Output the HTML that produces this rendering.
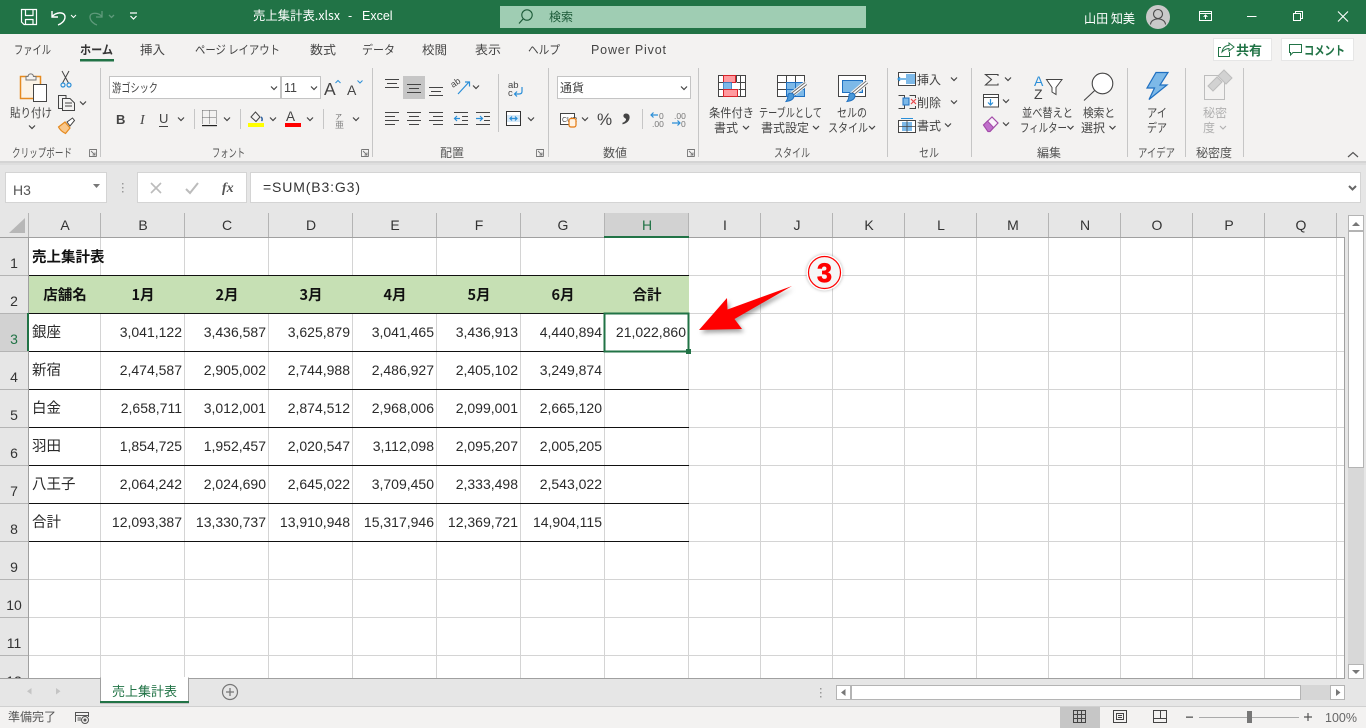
<!DOCTYPE html>
<html lang="ja">
<head>
<meta charset="utf-8">
<title>売上集計表.xlsx - Excel</title>
<style>
html,body{margin:0;padding:0;background:#fff;overflow:hidden}
svg{display:block;position:absolute;left:0;top:0}
text{font-family:"Liberation Sans","Noto Sans CJK JP",sans-serif;white-space:pre}
.j{font-family:"Noto Sans CJK JP","Liberation Sans",sans-serif}
.r{font-size:12px;fill:#444}
.g{font-size:12px;fill:#555}
.t{font-size:12px;fill:#444}
.d{font-size:14px;fill:#2a2a2a;text-anchor:end}
.k{font-size:14.5px;fill:#2a2a2a;font-family:"Noto Sans CJK JP","Liberation Sans",sans-serif}
.h{font-size:14.5px;fill:#111;font-weight:700;text-anchor:middle;font-family:"Noto Sans CJK JP","Liberation Sans",sans-serif}
.c{font-size:14px;fill:#333;text-anchor:middle}
.l{stroke:#444;stroke-width:1;fill:none;shape-rendering:crispEdges}
.b{stroke:#2b8fd8;stroke-width:1.2;fill:none}
.i{stroke:#444;stroke-width:1;fill:none}
</style>
</head>
<body>
<svg width="1366" height="728" viewBox="0 0 1366 728" xmlns="http://www.w3.org/2000/svg">
<defs>
<path id="v" d="M-3-1.5L0 1.5L3-1.5" fill="none" stroke="#444" stroke-width="1.2"/>
</defs>

<!-- backgrounds -->
<rect width="1366" height="728" fill="#fff"/>
<rect width="1366" height="34" fill="#217346"/>
<rect y="34" width="1366" height="127" fill="#f3f2f1"/>
<rect y="161" width="1366" height="52" fill="#e6e6e6"/>
<rect y="161" width="1366" height="2" fill="#d4d4d4"/>
<rect y="163" width="1366" height="2" fill="#dedede"/>

<!-- title bar -->
<g fill="none" stroke="#fff" stroke-width="1.2">
<path d="M21.5 9.5H36.5V24.5H24L21.5 22Z"/><path d="M25.5 9.5V15.5H33V9.5M25.5 24.5V19.5H33V24.5"/>
<path d="M52 11V17H58M52 17C55 12 65 11 65 17C65 21 61 24 58 25" stroke-width="1.4"/>
<path d="M71 15L73.5 17.5L76 15" stroke-width="1"/>
</g>
<g fill="none" stroke="#5f9a7b" stroke-width="1.3">
<path d="M102 11V17H96M102 17C99 12 90 12 90 17C90 21 94 24 97 25"/>
<path d="M109 15L111.5 17.5L114 15"/>
</g>
<path d="M130 13H137M130.5 16L133.5 19L136.5 16" fill="none" stroke="#fff" stroke-width="1.2"/>
<text class="j" x="253" y="20" font-size="12.5" fill="#fff" textLength="87" lengthAdjust="spacingAndGlyphs">売上集計表.xlsx</text>
<text x="348" y="20" font-size="12.5" fill="#fff">-</text>
<text x="362" y="20" font-size="12.5" fill="#fff">Excel</text>
<rect x="500" y="6" width="366" height="22" fill="#9fcdb3"/>
<circle cx="527" cy="15" r="5.2" fill="none" stroke="#1c5a38" stroke-width="1.1"/>
<path d="M523 19L519 23.5" stroke="#1c5a38" stroke-width="1.2"/>
<text class="j" x="549" y="21" font-size="12" fill="#1c5a38">検索</text>
<text class="j" x="1084" y="23" font-size="12.5" fill="#fff" textLength="51" lengthAdjust="spacingAndGlyphs">山田 知美</text>
<circle cx="1158" cy="17" r="12" fill="#c9c9c9"/>
<circle cx="1158" cy="14" r="4.5" fill="none" stroke="#4a4a4a" stroke-width="1.1"/>
<path d="M1150.5 24.5C1151 17 1165 17 1165.5 24.5" fill="none" stroke="#4a4a4a" stroke-width="1.1"/>
<g fill="none" stroke="#fff" stroke-width="1" shape-rendering="crispEdges">
<path d="M1199.5 11.5H1211.5V20.5H1199.5ZM1199.5 13.5H1211.5"/>
<path d="M1205.5 19V15.5M1203.5 17L1205.5 15L1207.5 17"/>
<path d="M1247 16.5H1256.5"/>
<path d="M1293.5 13.5H1300.5V20.5H1293.5ZM1295.5 13.5V11.5H1302.5V18.5H1300.5"/>
</g>
<path d="M1338 11.5L1348 21.5M1348 11.5L1338 21.5" stroke="#fff" stroke-width="1.1"/>

<!-- tabs -->
<text class="j t" x="14" y="54" textLength="37" lengthAdjust="spacingAndGlyphs">ファイル</text>
<text class="j" x="80" y="54" font-size="12" font-weight="700" fill="#333" textLength="33" lengthAdjust="spacingAndGlyphs">ホーム</text>
<text class="j t" x="140" y="54" textLength="25" lengthAdjust="spacingAndGlyphs">挿入</text>
<text class="j t" x="195" y="54" textLength="85" lengthAdjust="spacingAndGlyphs">ページ レイアウト</text>
<text class="j t" x="310" y="54" textLength="26" lengthAdjust="spacingAndGlyphs">数式</text>
<text class="j t" x="362" y="54" textLength="33" lengthAdjust="spacingAndGlyphs">データ</text>
<text class="j t" x="422" y="54" textLength="25" lengthAdjust="spacingAndGlyphs">校閲</text>
<text class="j t" x="475" y="54" textLength="26" lengthAdjust="spacingAndGlyphs">表示</text>
<text class="j t" x="528" y="54" textLength="32" lengthAdjust="spacingAndGlyphs">ヘルプ</text>
<text x="591" y="54" font-size="12.5" fill="#444" textLength="75">Power Pivot</text>
<rect x="80" y="59" width="34" height="2.5" fill="#217346"/>
<rect x="1213.5" y="38.5" width="58" height="22" fill="#fff" stroke="#e6e6e6"/>
<path d="M1221 47.5H1218.5V56.5H1229.5V52M1222 52C1223 47 1226 45.5 1229 45.5V43L1234 47L1229 51V48.5C1226 48.5 1224 50 1222 52Z" fill="none" stroke="#217346" stroke-width="1"/>
<text class="j" x="1236" y="55" font-size="13" font-weight="700" fill="#217346">共有</text>
<rect x="1281.5" y="38.5" width="72" height="22" fill="#fff" stroke="#e6e6e6"/>
<path d="M1289.5 44.5H1301.5V52.5H1293L1290.5 55V52.5H1289.5Z" fill="none" stroke="#217346" stroke-width="1"/>
<text class="j" x="1304" y="55" font-size="12.5" font-weight="700" fill="#217346" textLength="41" lengthAdjust="spacingAndGlyphs">コメント</text>

<!-- ribbon separators -->
<g fill="#c6c6c6">
<rect x="100" y="68" width="1" height="89"/><rect x="372" y="68" width="1" height="89"/><rect x="548" y="68" width="1" height="89"/><rect x="698" y="68" width="1" height="89"/><rect x="887" y="68" width="1" height="89"/><rect x="971" y="68" width="1" height="89"/><rect x="1127" y="68" width="1" height="89"/><rect x="1185" y="68" width="1" height="89"/><rect x="1243" y="68" width="1" height="89"/>
<rect x="194" y="109" width="1" height="20"/><rect x="240" y="109" width="1" height="20"/><rect x="323" y="109" width="1" height="20"/><rect x="498" y="74" width="1" height="58"/><rect x="642" y="109" width="1" height="20"/>
</g>

<!-- clipboard -->
<rect x="20.5" y="76.5" width="20" height="22" fill="#fbf3e6" stroke="#e58a1f" stroke-width="1.5"/>
<path d="M26 80V76.5H28C28.5 73 33 73 33.5 76.5H36V80Z" fill="#f3f2f1" stroke="#777"/>
<rect x="33.5" y="84.5" width="13" height="17" fill="#fff" stroke="#444"/>
<text class="j r" x="10" y="117" textLength="42" lengthAdjust="spacingAndGlyphs">貼り付け</text>
<use href="#v" x="32" y="127"/>
<path d="M62 71L68.5 83M69 71L62.5 83" stroke="#444" fill="none"/>
<circle cx="63" cy="85" r="2" fill="none" stroke="#2b8fd8" stroke-width="1.2"/><circle cx="69" cy="85" r="2" fill="none" stroke="#2b8fd8" stroke-width="1.2"/>
<path d="M62.5 108.5H58.5V95.5H66V98.5M62.5 98.5H70L74.5 103V110.5H62.5Z M65 103H72M65 106H72" class="i"/>
<use href="#v" x="83" y="103"/>
<path d="M58.5 127L65 122L70 128L65.5 133.5C62.5 132 60 130 58.5 127Z" fill="#f9c78a" stroke="#e58a1f" stroke-width="1.2"/>
<path d="M67 122L72.5 118L74.5 120.5L70 126Z" fill="#fff" stroke="#444"/>
<text class="j g" x="12" y="157" textLength="60" lengthAdjust="spacingAndGlyphs">クリップボード</text>
<path d="M89.5 149.5H96.5V156.5M89.5 149.5V156.5H96.5M91 151L95 155M95 152.5V155H92.5" fill="none" stroke="#777" stroke-width=".9"/>

<!-- font -->
<rect x="109.5" y="76.5" width="171" height="22" fill="#fff" stroke="#c4c4c4"/>
<text class="j" x="112" y="92" font-size="12" fill="#444" textLength="46" lengthAdjust="spacingAndGlyphs">游ゴシック</text>
<use href="#v" x="274" y="88"/>
<rect x="281.5" y="76.5" width="39" height="22" fill="#fff" stroke="#c4c4c4"/>
<text x="284" y="92" font-size="12.5" fill="#444">11</text>
<use href="#v" x="314" y="88"/>
<text x="324" y="95" font-size="17.5" fill="#444">A</text>
<path d="M335.5 83L338 80.5L340.5 83" fill="none" stroke="#2b8fd8"/>
<text x="347" y="95" font-size="14" fill="#444">A</text>
<path d="M357.5 80.5L360 83L362.5 80.5" fill="none" stroke="#2b8fd8"/>
<text x="116" y="124" font-size="13" font-weight="700" fill="#444">B</text>
<text x="140" y="124" font-size="14" fill="#444" style="font-style:italic;font-family:'Liberation Serif',serif">I</text>
<text x="159" y="123" font-size="13" fill="#444">U</text>
<rect x="159" y="126" width="9" height="1" fill="#444"/>
<use href="#v" x="181" y="119"/>
<path d="M202.5 110.5H216.5V124.5M202.5 110.5V124M209.5 110.5V124M202.5 117.5H216.5" fill="none" stroke="#666" stroke-dasharray="1 1" shape-rendering="crispEdges"/>
<rect x="202" y="125" width="15" height="1.2" fill="#222"/>
<use href="#v" x="227" y="119"/>
<path d="M251 117L255.5 112L260 117L256 121.5Z" fill="none" stroke="#444"/>
<path d="M261 117C262.5 118 262.5 120 261.5 121" stroke="#2b5f9e" fill="none" stroke-width="1.5"/>
<rect x="248" y="123" width="16" height="4" fill="#ffff00"/>
<use href="#v" x="273" y="119"/>
<text x="286" y="121" font-size="13.5" fill="#444">A</text>
<rect x="285" y="123" width="16" height="4" fill="#ff0000"/>
<use href="#v" x="310" y="119"/>
<text class="j" x="335" y="119" font-size="7" fill="#666">ア</text>
<text class="j" x="335" y="128" font-size="9" fill="#888">亜</text>
<use href="#v" x="356" y="119"/>
<text class="j g" x="212" y="157" textLength="33" lengthAdjust="spacingAndGlyphs">フォント</text>
<path d="M361.5 149.5H368.5V156.5M361.5 149.5V156.5H368.5M363 151L367 155M367 152.5V155H364.5" fill="none" stroke="#777" stroke-width=".9"/>

<!-- alignment -->
<rect x="403" y="76" width="22" height="23" fill="#c6c6c6"/>
<path d="M385 79.5H399M387 83.5H397M385 87.5H399" class="l"/>
<path d="M407 84.5H421M409 88.5H419M407 92.5H421" class="l"/>
<path d="M429 87.5H443M431 91.5H441M429 95.5H443" class="l"/>
<path d="M385 112.5H399M385 116.5H395M385 120.5H399M385 124.5H395" class="l"/>
<path d="M407 112.5H421M409 116.5H419M407 120.5H421M409 124.5H419" class="l"/>
<path d="M429 112.5H443M433 116.5H443M429 120.5H443M433 124.5H443" class="l"/>
<text x="453" y="88" font-size="9" fill="#444" transform="rotate(-35 453 88)">ab</text>
<path d="M458 94L469 82M465 82H469.5V86.5" class="b"/>
<use href="#v" x="476" y="87"/>
<path d="M454 112.5H468M462 116.5H468M462 120.5H468M454 124.5H468" class="l"/>
<path d="M460 118.5H454.5M457 116L454.5 118.5L457 121" class="b"/>
<path d="M476 112.5H490M484 116.5H490M484 120.5H490M476 124.5H490" class="l"/>
<path d="M476 118.5H482.5M480 116L482.5 118.5L480 121" class="b"/>
<text x="508" y="88" font-size="9.5" fill="#444">ab</text>
<text x="508" y="96" font-size="9.5" fill="#444">c</text>
<path d="M522 87V91.5C522 93 521 94 519 94H514.5M517 91.5L514.5 94L517 96.5" class="b"/>
<rect x="506.5" y="111.5" width="14" height="14" fill="#fff" stroke="#333"/>
<rect x="507" y="115" width="13" height="7" fill="#d5e8f7"/>
<path d="M510 118.5H517M512 116.5L510 118.5L512 120.5M515 116.5L517 118.5L515 120.5" class="b"/>
<use href="#v" x="531" y="119"/>
<text class="j g" x="440" y="157">配置</text>
<path d="M536.5 149.5H543.5V156.5M536.5 149.5V156.5H543.5M538 151L542 155M542 152.5V155H539.5" fill="none" stroke="#777" stroke-width=".9"/>

<!-- number -->
<rect x="557.5" y="76.5" width="133" height="22" fill="#fff" stroke="#c4c4c4"/>
<text class="j" x="560" y="92" font-size="12" fill="#444">通貨</text>
<use href="#v" x="684" y="88"/>
<rect x="560.5" y="113.5" width="14" height="11" fill="#fff" stroke="#444"/>
<text x="562" y="122" font-size="7" fill="#444">CUR</text>
<rect x="569" y="118.5" width="7" height="8.5" rx="2" fill="#fff3e3" stroke="#e57a10" stroke-width="1.2"/>
<use href="#v" x="585" y="119"/>
<text x="597" y="125" font-size="17" fill="#444">%</text>
<text x="622" y="119" font-size="36" font-weight="700" fill="#444" style="font-family:'Liberation Serif',serif">,</text>
<text x="659" y="119" font-size="8.5" fill="#777">0</text>
<text x="652" y="127" font-size="8.5" fill="#777">.00</text>
<path d="M651 115H658M653.5 112.5L651 115L653.5 117.5" class="b"/>
<text x="674" y="119" font-size="8.5" fill="#777">.00</text>
<text x="681" y="127" font-size="8.5" fill="#777">0</text>
<path d="M672 123H680M677.5 120.5L680 123L677.5 125.5" class="b"/>
<text class="j g" x="603" y="157">数値</text>
<path d="M687.5 149.5H694.5V156.5M687.5 149.5V156.5H694.5M689 151L693 155M693 152.5V155H690.5" fill="none" stroke="#777" stroke-width=".9"/>

<!-- styles -->
<rect x="718.5" y="75.5" width="27" height="21" fill="#fff" stroke="#444"/>
<rect x="723.5" y="75.5" width="12" height="7" fill="#ff9a9f" stroke="#d8232a"/>
<rect x="723.5" y="82.5" width="8" height="7" fill="#7db9e8" stroke="#2b7cc4" stroke-width=".8"/>
<rect x="723.5" y="89.5" width="14" height="7" fill="#ff9a9f" stroke="#d8232a"/>
<path d="M736.5 82.5H745M738.5 89.5H745M736.5 75.5V82M740.5 75.5V96.5M718.5 82.5H723M718.5 89.5H723" class="l"/>
<rect x="777.5" y="75.5" width="27" height="21" fill="#fff" stroke="#444"/>
<rect x="786.5" y="82.5" width="18" height="14" fill="#7db9e8" stroke="#1f70c1"/>
<path d="M786.5 75.5V82M795.5 75.5V82M777.5 82.5H786M777.5 89.5H786" stroke="#444" fill="none" shape-rendering="crispEdges"/>
<path d="M795.5 82.5V96.5M786.5 89.5H804.5" stroke="#1f70c1" fill="none" shape-rendering="crispEdges"/>
<path d="M806 83.5L790 96" stroke="#f3f2f1" stroke-width="5.5"/>
<path d="M806 83.5L790 96" stroke="#666" stroke-width="3.4"/>
<path d="M806 83.5L790 96" stroke="#fff" stroke-width="1.6"/>
<path d="M786 101.5C790 101 794 99.5 794 95.5C793 92.5 789.5 92.5 788 94.5C788 97 787.5 99.5 786 101.5Z" fill="#4a98d8" stroke="#1f70c1"/>
<rect x="838.5" y="75.5" width="27" height="21" fill="#fff" stroke="#444"/>
<rect x="842.5" y="80.5" width="20" height="12" fill="#7db9e8" stroke="#1f70c1"/>
<path d="M867 82L851 95.5" stroke="#f3f2f1" stroke-width="5.5"/>
<path d="M867 82L851 95.5" stroke="#666" stroke-width="3.4"/>
<path d="M867 82L851 95.5" stroke="#fff" stroke-width="1.6"/>
<path d="M847 101.5C851 101 855 99.5 855 95.5C854 92.5 850.5 92.5 849 94.5C849 97 848.500 99.5 847 101.5Z" fill="#4a98d8" stroke="#1f70c1"/>
<text class="j r" x="709" y="117" textLength="45" lengthAdjust="spacingAndGlyphs">条件付き</text>
<text class="j r" x="714" y="132">書式</text><use href="#v" x="746" y="127.5"/>
<text class="j r" x="759" y="117" textLength="63" lengthAdjust="spacingAndGlyphs">テーブルとして</text>
<text class="j r" x="761" y="132" textLength="48" lengthAdjust="spacingAndGlyphs">書式設定</text><use href="#v" x="816" y="127.5"/>
<text class="j r" x="837" y="117" textLength="30" lengthAdjust="spacingAndGlyphs">セルの</text>
<text class="j r" x="828" y="132" textLength="40" lengthAdjust="spacingAndGlyphs">スタイル</text><use href="#v" x="872" y="127.5"/>
<text class="j g" x="774" y="157" textLength="36" lengthAdjust="spacingAndGlyphs">スタイル</text>

<!-- cells -->
<rect x="898.5" y="72.5" width="17" height="13" fill="#fff" stroke="#444"/>
<rect x="906" y="74" width="9" height="10" fill="#7db9e8"/>
<path d="M898 79H906M900 77L898 79L900 81" class="b" stroke-width="1"/>
<path d="M898.5 95.5H904.5V108.5H898.5M909.5 95.5H915.5V98M909.5 108.500H915.5V106" class="i"/>
<rect x="903" y="98" width="6" height="7" fill="#7db9e8" stroke="#1f70c1"/>
<path d="M911 99L916 104M916 99L911 104" stroke="#e8474c" stroke-width="1.2"/>
<rect x="898.5" y="120.5" width="17" height="12" fill="#fff" stroke="#444"/>
<rect x="902" y="122" width="10" height="9" fill="#7db9e8"/>
<path d="M901 118.5H913" stroke="#2b8fd8"/><path d="M907 120V133M898 126.5H916" stroke="#444" fill="none" stroke-width=".8"/>
<text class="j r" x="917" y="84">挿入</text><use href="#v" x="954" y="79"/>
<text class="j r" x="917" y="107">削除</text><use href="#v" x="954" y="102"/>
<text class="j r" x="917" y="130">書式</text><use href="#v" x="948" y="125"/>
<text class="j g" x="919" y="157" textLength="20" lengthAdjust="spacingAndGlyphs">セル</text>

<!-- editing -->
<path d="M998 76V74.500H985.5L991.5 79.500L985.5 85H998V83.500" fill="none" stroke="#444" stroke-width="1.1"/>
<use href="#v" x="1008" y="79"/>
<rect x="983.5" y="94.5" width="15" height="12.5" fill="#fff" stroke="#444"/>
<path d="M983.5 97.5H998.5" stroke="#444"/>
<path d="M990.5 99V105M988 102.5L990.5 105L993 102.5" class="b"/>
<use href="#v" x="1006" y="101"/>
<path d="M983.5 125L992 117L998 123L990 131.5H988Z" fill="#fbf3fb" stroke="#a24ba8" stroke-width="1.2"/>
<path d="M983.5 125L987.5 121L993.5 127.5L990 131.5H988Z" fill="#c06fcb" stroke="#a24ba8"/>
<use href="#v" x="1006" y="124"/>
<text x="1034" y="86" font-size="14" fill="#2b8fd8">A</text>
<text x="1034" y="99" font-size="14" fill="#444">Z</text>
<path d="M1046.5 79.5H1062L1056 87.5V94.5L1052 92V87.5Z" fill="#fff" stroke="#444"/>
<circle cx="1102.5" cy="83.5" r="10.3" fill="#fff" stroke="#444" stroke-width="1.1"/>
<path d="M1094.700 90.500L1084 100.500" stroke="#444" stroke-width="1.1"/>
<text class="j r" x="1022" y="117" textLength="51" lengthAdjust="spacingAndGlyphs">並べ替えと</text>
<text class="j r" x="1020" y="132" textLength="47" lengthAdjust="spacingAndGlyphs">フィルター</text><use href="#v" x="1070.5" y="127.5"/>
<text class="j r" x="1083" y="117" textLength="32" lengthAdjust="spacingAndGlyphs">検索と</text>
<text class="j r" x="1081" y="132" textLength="24" lengthAdjust="spacingAndGlyphs">選択</text><use href="#v" x="1112.5" y="127.5"/>
<text class="j g" x="1037" y="157">編集</text>

<!-- ideas -->
<path d="M1156 72.5H1168L1160 85H1167L1149 99.5L1154.5 88H1147Z" fill="#7db9e8" stroke="#1f70c1" stroke-width="1.2"/>
<text class="j r" x="1147" y="117" textLength="20" lengthAdjust="spacingAndGlyphs">アイ</text>
<text class="j r" x="1147" y="132" textLength="20" lengthAdjust="spacingAndGlyphs">デア</text>
<text class="j g" x="1138" y="157" textLength="37" lengthAdjust="spacingAndGlyphs">アイデア</text>

<!-- sensitivity -->
<rect x="1204.5" y="75.5" width="20" height="24" fill="none" stroke="#bdbdbd"/>
<path d="M1208 86L1217 77L1222 82L1213 91ZM1218 76L1224 70L1232 78L1226 84Z" fill="#d2d2d2" stroke="#bdbdbd"/>
<text class="j" x="1203" y="117" font-size="12" fill="#b0b0b0">秘密</text>
<text class="j" x="1203" y="132" font-size="12" fill="#b0b0b0">度</text>
<path d="M1220 126L1223 129L1226 126" fill="none" stroke="#b0b0b0" stroke-width="1.1"/>
<text class="j g" x="1196" y="157">秘密度</text>
<path d="M1348 157L1353 152.5L1358 157" fill="none" stroke="#555" stroke-width="1.2"/>

<!-- formula bar -->
<rect x="5.5" y="172.5" width="101" height="30" fill="#fff" stroke="#d4d4d4"/>
<text x="13" y="195" font-size="14" fill="#555">H3</text>
<path d="M93 184H100L96.5 188Z" fill="#777"/>
<path d="M122 183h1.5v1.5h-1.5zM122 187h1.5v1.5h-1.5zM122 191h1.5v1.5h-1.5z" fill="#999"/>
<rect x="137.5" y="172.5" width="109" height="30" fill="#fff" stroke="#d4d4d4"/>
<path d="M151 183L161 193M161 183L151 193" stroke="#bcbcbc" stroke-width="1.6"/>
<path d="M186 189L190 193L198 183" fill="none" stroke="#bcbcbc" stroke-width="2"/>
<text x="222" y="192" font-size="14" font-weight="700" fill="#555" style="font-style:italic;font-family:'Liberation Serif',serif">fx</text>
<rect x="250.5" y="172.5" width="1110" height="30" fill="#fff" stroke="#d4d4d4"/>
<text x="263" y="192" font-size="14" fill="#333" textLength="97">=SUM(B3:G3)</text>
<path d="M1349 186L1352.5 189.5L1356 186" fill="none" stroke="#666" stroke-width="2"/>

<!-- headers -->
<rect y="213" width="1345" height="24" fill="#e6e6e6"/>
<rect y="237" width="29" height="442" fill="#e6e6e6"/>
<path d="M25 218V233H9Z" fill="#b7b7b7"/>
<rect x="604" y="213" width="85" height="24" fill="#d2d2d2"/>
<rect x="0" y="313" width="29" height="38" fill="#d2d2d2"/>

<!-- grid -->
<g stroke="#d4d4d4" stroke-width="1" fill="none" shape-rendering="crispEdges">
<path d="M100.5 237V679M184.5 237V679M268.5 237V679M352.5 237V679M436.5 237V679M520.5 237V679M604.5 237V679M688.5 237V679M760.5 237V679M832.5 237V679M904.5 237V679M976.5 237V679M1048.5 237V679M1120.5 237V679M1192.5 237V679M1264.5 237V679M1336.5 237V679"/>
<path d="M29 275.5H1344M29 313.5H1344M29 351.5H1344M29 389.5H1344M29 427.5H1344M29 465.5H1344M29 503.5H1344M29 541.5H1344M29 579.5H1344M29 617.5H1344M29 655.5H1344"/>
</g>
<g stroke="#b4b4b4" stroke-width="1" fill="none" shape-rendering="crispEdges">
<path d="M28.5 213V237M100.5 213V237M184.5 213V237M268.5 213V237M352.5 213V237M436.5 213V237M520.5 213V237M604.5 213V237M688.5 213V237M760.5 213V237M832.5 213V237M904.5 213V237M976.5 213V237M1048.5 213V237M1120.5 213V237M1192.5 213V237M1264.5 213V237M1336.5 213V237"/>
<path d="M0 275.5H28M0 313.5H28M0 351.5H28M0 389.5H28M0 427.5H28M0 465.5H28M0 503.5H28M0 541.5H28M0 579.5H28M0 617.5H28M0 655.5H28"/>
</g>
<path d="M28.5 237V679M0 237.5H1344.5V679" stroke="#a0a0a0" fill="none" shape-rendering="crispEdges"/>

<!-- header row green fill -->
<rect x="29" y="276" width="660" height="37" fill="#c6e0b4"/>

<!-- black borders -->
<path d="M29 275.5H689M29 313.5H689M29 351.5H689M29 389.5H689M29 427.5H689M29 465.5H689M29 503.5H689M29 541.5H689" stroke="#111" fill="none" shape-rendering="crispEdges"/>

<!-- active row/col markers -->
<rect x="604" y="236" width="85" height="2" fill="#217346"/>
<rect x="27" y="313" width="2" height="38" fill="#217346"/>

<!-- column letters -->
<text class="c" x="65" y="230">A</text><text class="c" x="143" y="230">B</text><text class="c" x="227" y="230">C</text><text class="c" x="311" y="230">D</text><text class="c" x="395" y="230">E</text><text class="c" x="479" y="230">F</text><text class="c" x="563" y="230">G</text><text class="c" x="647" y="230" style="fill:#217346">H</text><text class="c" x="725" y="230">I</text><text class="c" x="797" y="230">J</text><text class="c" x="869" y="230">K</text><text class="c" x="941" y="230">L</text><text class="c" x="1013" y="230">M</text><text class="c" x="1085" y="230">N</text><text class="c" x="1157" y="230">O</text><text class="c" x="1229" y="230">P</text><text class="c" x="1301" y="230">Q</text>
<!-- row numbers -->
<text class="c" x="14" y="268">1</text><text class="c" x="14" y="306">2</text><text class="c" x="14" y="344" style="fill:#217346">3</text><text class="c" x="14" y="382">4</text><text class="c" x="14" y="420">5</text><text class="c" x="14" y="458">6</text><text class="c" x="14" y="496">7</text><text class="c" x="14" y="534">8</text><text class="c" x="14" y="572">9</text><text class="c" x="14" y="610">10</text><text class="c" x="14" y="648">11</text><text class="c" x="14" y="686">12</text>

<!-- cells -->
<text class="k" x="32" y="262" font-weight="700" style="fill:#111">売上集計表</text>
<text class="h" x="65" y="300">店舗名</text><text class="h" x="143" y="300">1月</text><text class="h" x="227" y="300">2月</text><text class="h" x="311" y="300">3月</text><text class="h" x="395" y="300">4月</text><text class="h" x="479" y="300">5月</text><text class="h" x="563" y="300">6月</text><text class="h" x="647" y="300">合計</text>

<text class="k" x="32" y="337">銀座</text>
<text class="d" x="182" y="337">3,041,122</text><text class="d" x="266" y="337">3,436,587</text><text class="d" x="350" y="337">3,625,879</text><text class="d" x="434" y="337">3,041,465</text><text class="d" x="518" y="337">3,436,913</text><text class="d" x="602" y="337">4,440,894</text><text class="d" x="686" y="337">21,022,860</text>
<text class="k" x="32" y="375">新宿</text>
<text class="d" x="182" y="375">2,474,587</text><text class="d" x="266" y="375">2,905,002</text><text class="d" x="350" y="375">2,744,988</text><text class="d" x="434" y="375">2,486,927</text><text class="d" x="518" y="375">2,405,102</text><text class="d" x="602" y="375">3,249,874</text>
<text class="k" x="32" y="413">白金</text>
<text class="d" x="182" y="413">2,658,711</text><text class="d" x="266" y="413">3,012,001</text><text class="d" x="350" y="413">2,874,512</text><text class="d" x="434" y="413">2,968,006</text><text class="d" x="518" y="413">2,099,001</text><text class="d" x="602" y="413">2,665,120</text>
<text class="k" x="32" y="451">羽田</text>
<text class="d" x="182" y="451">1,854,725</text><text class="d" x="266" y="451">1,952,457</text><text class="d" x="350" y="451">2,020,547</text><text class="d" x="434" y="451">3,112,098</text><text class="d" x="518" y="451">2,095,207</text><text class="d" x="602" y="451">2,005,205</text>
<text class="k" x="32" y="489">八王子</text>
<text class="d" x="182" y="489">2,064,242</text><text class="d" x="266" y="489">2,024,690</text><text class="d" x="350" y="489">2,645,022</text><text class="d" x="434" y="489">3,709,450</text><text class="d" x="518" y="489">2,333,498</text><text class="d" x="602" y="489">2,543,022</text>
<text class="k" x="32" y="527">合計</text>
<text class="d" x="182" y="527">12,093,387</text><text class="d" x="266" y="527">13,330,737</text><text class="d" x="350" y="527">13,910,948</text><text class="d" x="434" y="527">15,317,946</text><text class="d" x="518" y="527">12,369,721</text><text class="d" x="602" y="527">14,904,115</text>

<!-- selection -->
<rect x="604.5" y="313.5" width="84" height="38" fill="none" stroke="#217346" stroke-width="2"/>
<rect x="686" y="349" width="5" height="5" fill="#217346"/>

<!-- arrow + marker -->
<path d="M699 330L727 298L727.5 309.5L792 286L734.5 319L742 329Z" fill="#ff0000" style="filter:drop-shadow(2px 3px 2px rgba(0,0,0,.35))"/>
<circle cx="824.5" cy="272.500" r="18" fill="#fff" style="filter:drop-shadow(0 0 1.5px rgba(0,0,0,.3))"/>
<circle cx="824.5" cy="272.500" r="16" fill="#f6f6f6" stroke="#ff0000" stroke-width="1.2"/>
<text x="824.5" y="282" font-size="27" font-weight="700" fill="#ff0000" text-anchor="middle" stroke="#ff0000" stroke-width=".7">3</text>

<!-- vertical scrollbar -->
<rect x="1345" y="213" width="21" height="466" fill="#e6e6e6"/>
<rect x="1348" y="231" width="16" height="448" fill="#d8d8d8"/>
<rect x="1348.5" y="215.5" width="15" height="15" fill="#fff" stroke="#b4b4b4"/>
<path d="M1352 226L1356 222L1360 226Z" fill="#777"/>
<rect x="1348.5" y="231.5" width="15" height="236" fill="#fff" stroke="#b4b4b4"/>
<rect x="1348.5" y="664.5" width="15" height="14" fill="#fff" stroke="#b4b4b4"/>
<path d="M1352 670H1360L1356 674Z" fill="#777"/>

<!-- sheet tabs -->
<rect y="679" width="1366" height="27" fill="#e6e6e6"/>
<rect y="678" width="1345" height="1" fill="#a0a0a0"/>
<rect y="706" width="1366" height="22" fill="#f3f2f1"/>
<rect y="706" width="1366" height="1" fill="#d0d0d0"/>
<path d="M31.5 688V694.5L27 691.25ZM56 688V694.5L60.5 691.25Z" fill="#c4c4c4"/>
<rect x="100.5" y="678" width="88" height="25" fill="#fff" stroke="#a0a0a0"/>
<rect x="101" y="677" width="87" height="3" fill="#fff"/>
<rect x="100" y="701" width="89" height="2" fill="#217346"/>
<text class="j" x="112" y="696" font-size="13" fill="#217346">売上集計表</text>
<circle cx="230" cy="692" r="7.5" fill="none" stroke="#777" stroke-width="1.2"/>
<path d="M226 692H234M230 688V696" stroke="#777" stroke-width="1.3"/>
<path d="M820 688h1.5v1.5h-1.5zM820 692h1.5v1.5h-1.5zM820 696h1.5v1.5h-1.5z" fill="#999"/>
<rect x="836.5" y="685.5" width="14" height="14" fill="#fff" stroke="#b4b4b4"/>
<path d="M845.5 689V696L841 692.5Z" fill="#777"/>
<rect x="851" y="685" width="480" height="15" fill="#d6d6d6"/>
<rect x="851.5" y="685.5" width="449" height="14" fill="#fff" stroke="#b4b4b4"/>
<rect x="1330.5" y="685.5" width="14" height="14" fill="#fff" stroke="#b4b4b4"/>
<path d="M1336 689V696L1340.5 692.5Z" fill="#777"/>

<!-- status -->
<text class="j" x="8" y="721" font-size="12" fill="#555">準備完了</text>
<path d="M76 721.5H75.5V712.5H88.5V717M75.5 715.5H88.5M77.5 718H81M77.5 720H81" fill="none" stroke="#555"/>
<circle cx="85" cy="720" r="3.5" fill="none" stroke="#555"/><circle cx="85" cy="720" r="1.5" fill="#555"/>
<rect x="1060" y="707" width="40" height="21" fill="#c6c6c6"/>
<path d="M1073.5 710.5H1085.5V722.5H1073.5ZM1077.5 710.5V722.5M1081.5 710.5V722.5M1073.5 714.5H1085.5M1073.5 718.5H1085.5" class="l"/>
<path d="M1113.5 710.5H1126.5V722.5H1113.5ZM1116.5 713.5H1123.5V719.5H1116.5ZM1118 715.5H1122M1118 717.5H1122" class="l"/>
<path d="M1153.5 710.5H1166.5V722.5H1153.5ZM1153.5 718.5H1166.5M1160.5 710.5V718.5" class="l"/>
<rect x="1186" y="716.5" width="7" height="1.3" fill="#555"/>
<rect x="1199" y="717" width="100" height="1" fill="#aaa"/>
<rect x="1247" y="711" width="5" height="12" fill="#777"/>
<path d="M1304 717H1312M1308 713V721" stroke="#555" stroke-width="1.2"/>
<text x="1325" y="722" font-size="12.5" fill="#666">100%</text>
</svg>
</body>
</html>
